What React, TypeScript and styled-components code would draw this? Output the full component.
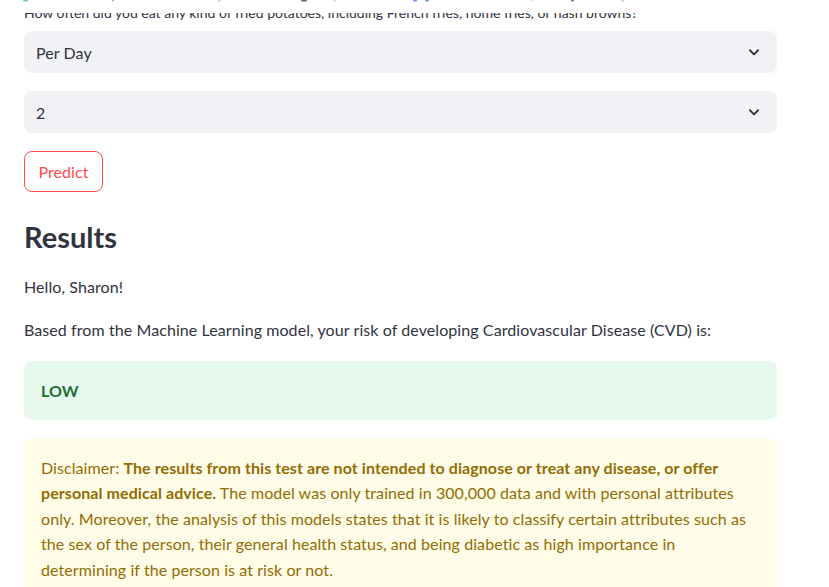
import styled, { createGlobalStyle } from 'styled-components';

const GlobalStyle = createGlobalStyle`
  html, body {
    margin: 0;
    padding: 0;
    background: #ffffff;
    overflow: hidden;
  }
  body {
    font-family: Lato, "Source Sans Pro", "Noto Sans", sans-serif;
    color: #31333f;
    -webkit-font-smoothing: antialiased;
  }
`;

const Page = styled.main`
  width: 829px;
  height: 587px;
  overflow: hidden;
  display: flex;
  flex-direction: column;
`;

const TopStrip = styled.svg`
  display: block;
  width: 829px;
  height: 3px;
  flex-shrink: 0;
  opacity: 0.7;
`;

const Block = styled.section`
  display: flex;
  flex-direction: column;
  padding: 0 52px 0 24px;
`;

/* the question label is scrolled partly under the header, so only its lower half shows */
const QuestionClip = styled.div`
  height: 10px;
  margin: 10px 0 8px;
  overflow: hidden;
`;

const Question = styled.label`
  display: block;
  margin-top: -10px;
  font-size: 14px;
  line-height: 20px;
  white-space: nowrap;
`;

const Select = styled.div`
  height: 42px;
  box-sizing: border-box;
  background: #f0f2f6;
  border-radius: 8px;
  display: flex;
  align-items: center;
  justify-content: space-between;
  padding: 0 16px 0 12px;
  font-size: 16px;
  letter-spacing: 0.08px;
  margin-bottom: 18px;
  cursor: pointer;
`;

const Chevron = () => (
  <svg width="14" height="14" viewBox="0 0 24 24" fill="none">
    <path
      d="M5 9l7 7 7-7"
      stroke="#31333f"
      strokeWidth="3.2"
      strokeLinecap="round"
      strokeLinejoin="round"
    />
  </svg>
);

const PredictButton = styled.button`
  align-self: flex-start;
  height: 41px;
  width: 79px;
  box-sizing: border-box;
  background: #ffffff;
  border: 1px solid #ff4b4b;
  border-radius: 8px;
  color: #ff4b4b;
  font-family: inherit;
  font-size: 16px;
  letter-spacing: 0.08px;
  padding: 0 12px;
  margin-bottom: 28px;
  cursor: pointer;
`;

const Heading = styled.h2`
  margin: 0 0 19px;
  font-size: 29px;
  font-weight: 700;
  line-height: 1.2;
  color: #31333f;
`;

const Para = styled.p`
  margin: 0 0 18px;
  font-size: 16px;
  line-height: 25.6px;
  letter-spacing: 0.08px;
`;

const Alert = styled.div<{ $kind: 'success' | 'warning' }>`
  border-radius: 8px;
  padding: 17px 16px 16px 17px;
  font-size: 16px;
  line-height: 25.6px;
  letter-spacing: 0.08px;
  margin-bottom: 18px;
  background: ${(p) => (p.$kind === 'success' ? '#e7f8ec' : '#fffce7')};
  color: ${(p) => (p.$kind === 'success' ? '#177233' : '#926c05')};
`;

const Strong = styled.strong`
  font-weight: 700;
`;

const bits: [number, number, string][] = [
  [23, 5, '#3dbb6a'],
  [112, 2, '#777777'],
  [218, 3, '#c9b98a'],
  [301, 6, '#333333'],
  [333, 3, '#f4b9a0'],
  [413, 4, '#3a62d6'],
  [425, 4, '#3a62d6'],
  [531, 3, '#f6c4ad'],
  [571, 3, '#333333'],
  [621, 3, '#7fc4c4'],
];

export default function App() {
  return (
    <>
      <GlobalStyle />
      <Page>
        <TopStrip viewBox="0 0 829 3">
          {bits.map(([x, w, c]) => (
            <rect key={x} x={x} y={0} width={w} height={1.6} rx={0.8} fill={c} />
          ))}
        </TopStrip>
        <Block>
          <QuestionClip>
            <Question>
              How often did you eat any kind of fried potatoes, including French
              fries, home fries, or hash browns?
            </Question>
          </QuestionClip>
          <Select>
            <span>Per Day</span>
            <Chevron />
          </Select>
          <Select>
            <span>2</span>
            <Chevron />
          </Select>
          <PredictButton>Predict</PredictButton>
          <Heading>Results</Heading>
          <Para>Hello, Sharon!</Para>
          <Para>
            Based from the Machine Learning model, your risk of developing
            Cardiovascular Disease (CVD) is:
          </Para>
          <Alert $kind="success">
            <Strong>LOW</Strong>
          </Alert>
          <Alert $kind="warning">
            Disclaimer:{' '}
            <Strong>
              The results from this test are not intended to diagnose or treat
              any disease, or offer personal medical advice.
            </Strong>{' '}
            The model was only trained in 300,000 data and with personal
            attributes only. Moreover, the analysis of this models states that
            it is likely to classify certain attributes such as the sex of the
            person, their general health status, and being diabetic as high
            importance in determining if the person is at risk or not.
          </Alert>
        </Block>
      </Page>
    </>
  );
}
